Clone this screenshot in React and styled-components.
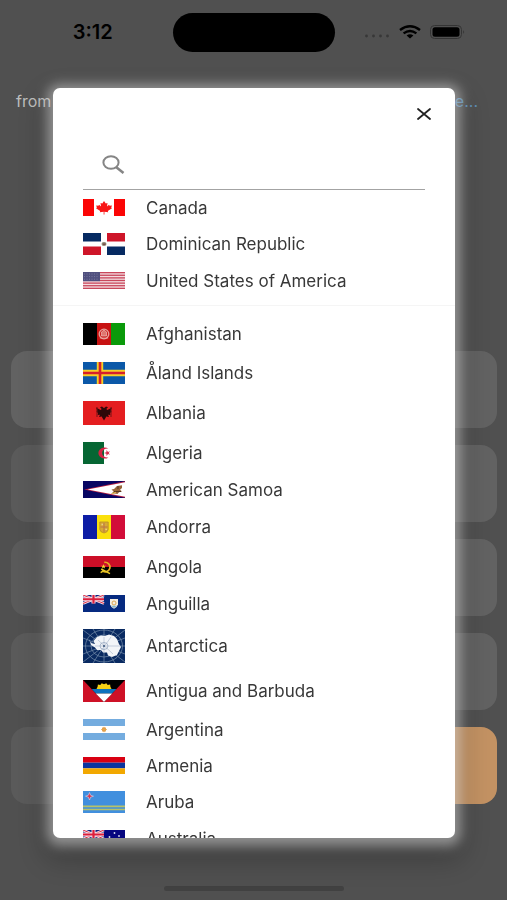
import React, { useState } from "react";
import styled, { createGlobalStyle } from "styled-components";

const GlobalStyle = createGlobalStyle`
  body {
    margin: 0;
    background-color: #505050;
    font-family: Inter, "Liberation Sans", sans-serif;
  }
  * {
    box-sizing: border-box;
  }
`;

const Screen = styled.div`
  display: flex;
  flex-direction: column;
  min-height: 100vh;
  background-color: #505050;
`;

const StatusBar = styled.header`
  display: grid;
  grid-template-columns: 1fr 162px 1fr;
  align-items: center;
  height: 64px;
`;

const Clock = styled.time`
  padding-left: 13px;
  text-align: center;
  font-size: 20px;
  font-weight: 600;
  line-height: 24px;
  color: #000000;
`;

const Island = styled.div`
  height: 39px;
  border-radius: 20px;
  background-color: #000000;
`;

const StatusIcons = styled.div`
  display: flex;
  justify-content: flex-end;
  align-items: center;
  gap: 9px;
  padding-right: 41px;
`;

const Summary = styled.div`
  display: flex;
  justify-content: space-between;
  padding: 27px 29px 0 16px;
  font-size: 16px;
  line-height: 20px;
  color: #bdbdbd;
  a {
    color: #5f8fb5;
    text-decoration: none;
  }
`;

const Keypad = styled.div`
  display: grid;
  grid-template-columns: repeat(4, 1fr);
  gap: 17px 12px;
  margin-top: auto;
  padding: 0 10px 0 11px;
`;

const Key = styled.button`
  height: 77px;
  border: none;
  border-radius: 16px;
  background-color: ${(props) => (props.$accent ? "#c39263" : props.$side ? "#626262" : "#5a5a5a")};
`;

const HomeIndicator = styled.div`
  align-self: center;
  width: 180px;
  height: 5px;
  margin: 82px 0 9px;
  border-radius: 3px;
  background-color: #414141;
`;

const Overlay = styled.div`
  position: fixed;
  inset: 0;
  display: flex;
  padding: 88px 52px 62px 53px;
`;

const Dialog = styled.section`
  display: flex;
  flex-direction: column;
  flex: 1;
  min-width: 0;
  border-radius: 7px;
  background-color: #ffffff;
  box-shadow: 0 2px 12px 6px rgba(255, 255, 255, 0.42),
    0 14px 26px 10px rgba(0, 0, 0, 0.2);
`;

const DialogHeader = styled.div`
  display: flex;
  justify-content: flex-end;
  align-items: center;
  height: 52px;
  padding-right: 18px;
`;

const CloseButton = styled.button`
  display: flex;
  padding: 6px;
  border: none;
  background: none;
  cursor: pointer;
`;

const SearchField = styled.label`
  display: flex;
  align-items: center;
  flex-shrink: 0;
  gap: 12px;
  height: 50px;
  margin: 0 30px;
  padding-left: 19px;
  border-bottom: 1px solid #a3a3a3;
  input {
    flex: 1;
    min-width: 0;
    height: 30px;
    padding: 0;
    border: none;
    outline: none;
    background: none;
    font-family: inherit;
    font-size: 17px;
    color: #333333;
  }
`;

const Scroller = styled.div`
  flex: 1;
  min-height: 0;
  overflow-y: auto;
  border-radius: 0 0 7px 7px;
  scrollbar-width: none;
`;

const CountryList = styled.ul`
  display: flex;
  flex-direction: column;
  gap: 17px;
  margin: 0;
  padding: ${(props) => (props.$pinned ? "9px 30px 16px" : "17px 30px")};
  border-bottom: ${(props) => (props.$pinned ? "1px solid #f5f5f5" : "none")};
  list-style: none;
`;

const CountryButton = styled.button`
  display: flex;
  align-items: center;
  gap: 21px;
  width: 100%;
  padding: 0;
  border: none;
  background: none;
  font-family: inherit;
  font-size: 17px;
  line-height: 16px;
  text-align: left;
  color: #383838;
  cursor: pointer;
  svg {
    flex-shrink: 0;
  }
`;

const UnionJack = ({ h }) => (
  <g>
    <rect width="21" height={h} fill="#10207c" />
    <path d={`M0 0L21 ${h}M21 0L0 ${h}`} stroke="#f4dfe8" strokeWidth="2.6" />
    <path d={`M0 0L21 ${h}M21 0L0 ${h}`} stroke="#dd3348" strokeWidth="1" />
    <path d={`M10.5 0V${h}M0 ${h / 2}H21`} stroke="#f4dfe8" strokeWidth="4" />
    <path d={`M10.5 0V${h}M0 ${h / 2}H21`} stroke="#dc1f3c" strokeWidth="2.2" />
  </g>
);

const stripes = (colors, h) =>
  colors.map((fill, i) => (
    <rect key={i} y={(i * h) / colors.length} width="42" height={h / colors.length} fill={fill} />
  ));

const columns = (colors, h) =>
  colors.map((fill, i) => <rect key={i} x={i * 14} width="14" height={h} fill={fill} />);

const flags = {
  ca: {
    h: 17,
    art: (
      <>
        <rect width="42" height="17" fill="#fff" />
        <path d="M0 0H11V17H0ZM31 0H42V17H31Z" fill="#fb0505" />
        <path
          d="M21 2L22.8 4.6L24.5 4L24 7.4L26 5.7L26.6 6.8L29 6.5L28.2 8.5L29 9.2L24.8 12L25.2 13.2L21.4 12.7L21.5 15.5H20.6L20.7 12.7L16.8 13.2L17.2 12L13 9.2L13.9 8.5L13.1 6.5L15.5 6.8L16 5.7L18.1 7.4L17.5 4L19.3 4.6Z"
          fill="#f81616"
        />
      </>
    ),
  },
  do: {
    h: 22,
    art: (
      <>
        <rect width="42" height="22" fill="#fff" />
        <path d="M0 0H18V8.6H0ZM24 13.4H42V22H24Z" fill="#062a62" />
        <path d="M24 0H42V8.6H24ZM0 13.4H18V22H0Z" fill="#ce1529" />
        <ellipse cx="21" cy="11" rx="2.5" ry="2" fill="#8d8770" />
        <path d="M20 10.5H22.4V12H20Z" fill="#7a4d4c" />
      </>
    ),
  },
  us: {
    h: 17,
    art: (
      <>
        <rect width="42" height="17" fill="#f3dce0" />
        {[0, 1, 2, 3, 4, 5, 6].map((i) => (
          <rect key={i} y={(i * 34) / 13} width="42" height="1.3" fill="#c9475c" />
        ))}
        <rect width="17" height="9.2" fill="#50507f" />
        <path d="M1 2H16M1 4.6H16M1 7.2H16" stroke="#8080a5" strokeWidth="0.8" strokeDasharray="1 1.5" />
      </>
    ),
  },
  af: {
    h: 22,
    art: (
      <>
        {columns(["#000", "#c71212", "#0a9a0a"], 22)}
        <circle cx="21" cy="11" r="4.8" fill="none" stroke="#e7a09a" strokeWidth="1.3" />
        <path d="M18.4 9L21 7L23.6 9V13H18.4ZM16.8 15H25.2" fill="#df7770" stroke="#f0c3bc" strokeWidth="0.7" />
      </>
    ),
  },
  ax: {
    h: 22,
    art: (
      <>
        <rect width="42" height="22" fill="#0b58a8" />
        <path d="M17 0V22M0 11H42" stroke="#f7cf26" strokeWidth="6.4" />
        <path d="M17 0V22M0 11H42" stroke="#d61e2c" strokeWidth="2.6" />
      </>
    ),
  },
  al: {
    h: 24,
    art: (
      <>
        <rect width="42" height="24" fill="#e41e20" />
        <path
          d="M20.8 7L19 5.5L17 6.2L18.7 8L17.6 9L13 6.5L14 9L13.6 11L15 12L14.7 14L17 13.7L16 16L18.7 15.4L19.5 17L21 19.5L22.5 17L23.3 15.4L26 16L25 13.7L27.3 14L27 12L28.4 11L28 9L29 6.5L24.4 9L23.3 8L25 6.2L23 5.5L21.2 7Z"
          fill="#2f0809"
        />
        <path d="M14 6V16M28 6V16" stroke="#751315" strokeWidth="1" />
      </>
    ),
  },
  dz: {
    h: 22,
    art: (
      <>
        <rect width="42" height="22" fill="#fff" />
        <rect width="21" height="22" fill="#066633" />
        <path d="M25.4 6.6A6.2 5.6 0 1 0 25.4 15.4A5.2 4.5 0 1 1 25.4 6.6Z" fill="#d42242" />
        <path d="M21 11L23.4 10.3L23.5 8L25 9.9L27 9.2L25.7 11L27 12.8L25 12.1L23.5 14L23.4 11.7Z" fill="#d8294a" />
      </>
    ),
  },
  as: {
    h: 17,
    art: (
      <>
        <rect width="42" height="17" fill="#070562" />
        <path d="M42 0.2L1 8.5L42 16.8Z" fill="#b51f41" />
        <path d="M42 1.2L4.5 8.5L42 15.8Z" fill="#fff" />
        <path d="M39 4.2L34 5L31 8L28.5 8.5L30.6 10.6L28 13L31.5 12.4L34.5 13L36 11.3L39 10.5L37 8.8L39 7Z" fill="#97663a" />
        <path d="M31 10.5H38M35 5V8" stroke="#543725" strokeWidth="1" />
        <path d="M29 12.8L33 11.2" stroke="#edc64c" strokeWidth="0.9" />
      </>
    ),
  },
  ad: {
    h: 24,
    art: (
      <>
        {columns(["#0d1da5", "#fae00c", "#d20d39"], 24)}
        <path d="M16.8 7H25.2V14.5Q25 17 21 18Q17 17 16.8 14.5Z" fill="#d7a935" stroke="#b98b2a" strokeWidth="0.8" />
        <path d="M21 8V17M17.5 12H24.6" stroke="#ba7449" strokeWidth="1" />
        <path d="M18.5 9.5H20M22.4 14.4H24" stroke="#e9cf87" strokeWidth="1.4" />
      </>
    ),
  },
  ao: {
    h: 22,
    art: (
      <>
        {stripes(["#cc0e27", "#000"], 22)}
        <path d="M21.3 6.3A5 4.8 0 1 1 19 14.9" fill="none" stroke="#e1ae22" strokeWidth="1.7" />
        <path d="M18.2 13L27 17.7M17.6 16.6L21 14.5" stroke="#e9ca27" strokeWidth="1.5" />
        <path d="M20.5 8L21.1 9.7H23L21.5 10.8L22.1 12.6L20.5 11.5L18.9 12.6L19.5 10.8L18 9.7H19.9Z" fill="#f4d82e" />
      </>
    ),
  },
  ai: {
    h: 17,
    art: (
      <>
        <rect width="42" height="17" fill="#062a80" />
        <UnionJack h={8.5} />
        <path d="M27 4H35V9.5Q34 12.5 31 13.8Q28 12.5 27 9.5Z" fill="#f5eee1" />
        <path d="M28 10.8H34L31 13Z" fill="#81b5cc" />
        <circle cx="31" cy="8" r="2" fill="none" stroke="#dfa852" strokeWidth="1" />
      </>
    ),
  },
  aq: {
    h: 34,
    art: (
      <>
        <rect width="42" height="34" fill="#092a61" />
        <g fill="none" stroke="#7890ae" strokeWidth="0.7">
          <ellipse cx="21" cy="17" rx="18.5" ry="16" />
          <ellipse cx="21" cy="17" rx="13" ry="11" />
          <path d="M21 0V34M0 17H42M0 1L42 33M42 1L0 33M10 0L32 34M32 0L10 34M0 9L42 25M0 25L42 9" />
        </g>
        <path
          d="M6 10L8 14L12 15L10.5 12L14 8L18 6.5L22 7L26 5.5L31 7L34 10L36 15L38 18L36 22L34 26L29 28L25 26.5L24 23.5L20 23.5L18 21L14 21L12 18.5L8 16Z"
          fill="#f2f5f8"
        />
        <path d="M21 8V24M12 17H37M15 11L30 25M28 8L18 22" stroke="#a4b4c9" strokeWidth="0.6" />
        <ellipse cx="21" cy="17" rx="4" ry="3.5" fill="none" stroke="#8c9fb9" strokeWidth="0.7" />
        <circle cx="21" cy="17" r="1" fill="#385379" />
      </>
    ),
  },
  ag: {
    h: 22,
    art: (
      <>
        <rect width="42" height="22" fill="#ce1126" />
        <path d="M0 0H42L21 22Z" fill="#000" />
        <path d="M13.5 9L14.6 6.8L14.9 4.6L17.3 5L18.7 3.2L21 4.2L23.3 3.2L24.7 5L27.1 4.6L27.4 6.8L28.5 9Z" fill="#f5d116" />
        <path d="M8.6 9H33.4L29 13.4H13Z" fill="#0d72bd" />
        <path d="M12.8 13.4H29.2L21 22Z" fill="#fff" />
      </>
    ),
  },
  ar: {
    h: 21,
    art: (
      <>
        {stripes(["#74acdf", "#fff", "#74acdf"], 21)}
        <circle cx="21" cy="10.5" r="2.2" fill="#da9545" />
        <path d="M18 10.5H24M21 7.8V13.2M19 8.7L23 12.3M23 8.7L19 12.3" stroke="#eaa94f" strokeWidth="0.7" />
      </>
    ),
  },
  am: { h: 17, art: stripes(["#d90012", "#0a35a0", "#f2a800"], 17) },
  aw: {
    h: 22,
    art: (
      <>
        <rect width="42" height="22" fill="#418fde" />
        <path d="M0 15.4H42M0 18.5H42" stroke="#b7c269" strokeWidth="1.7" />
        <path d="M6.5 1.5L7.6 4.2L10.5 5.2L7.6 6.2L6.5 9L5.4 6.2L2.5 5.2L5.4 4.2Z" fill="#d43452" stroke="#d9d8e9" strokeWidth="0.6" />
      </>
    ),
  },
  au: {
    h: 17,
    art: (
      <>
        <rect width="42" height="17" fill="#06067f" />
        <UnionJack h={9} />
        <g fill="#dfe1f1">
          <circle cx="31.5" cy="3" r="0.9" />
          <circle cx="36" cy="6" r="0.9" />
          <circle cx="26.5" cy="7" r="0.9" />
          <circle cx="33" cy="8.5" r="0.6" />
          <circle cx="31.5" cy="14" r="1" />
          <circle cx="10.5" cy="13" r="2" />
        </g>
      </>
    ),
  },
};

const pinned = [
  ["ca", "Canada"],
  ["do", "Dominican Republic"],
  ["us", "United States of America"],
];

const countries = [
  ["af", "Afghanistan"],
  ["ax", "Åland Islands"],
  ["al", "Albania"],
  ["dz", "Algeria"],
  ["as", "American Samoa"],
  ["ad", "Andorra"],
  ["ao", "Angola"],
  ["ai", "Anguilla"],
  ["aq", "Antarctica"],
  ["ag", "Antigua and Barbuda"],
  ["ar", "Argentina"],
  ["am", "Armenia"],
  ["aw", "Aruba"],
  ["au", "Australia"],
];

const Flag = ({ code }) => {
  const { h, art } = flags[code];
  return (
    <svg width="42" height={h} viewBox={`0 0 42 ${h}`} aria-hidden="true">
      {art}
    </svg>
  );
};

const Countries = ({ items, isPinned }) => (
  <CountryList $pinned={isPinned}>
    {items.map(([code, name]) => (
      <li key={code}>
        <CountryButton type="button">
          <Flag code={code} />
          {name}
        </CountryButton>
      </li>
    ))}
  </CountryList>
);

const SignalIcons = () => (
  <StatusIcons>
    <svg width="26" height="14" viewBox="0 0 26 14">
      <g fill="#373737">
        <circle cx="2.5" cy="11" r="1.4" />
        <circle cx="9.5" cy="11" r="1.4" />
        <circle cx="16.5" cy="11" r="1.4" />
        <circle cx="23.5" cy="11" r="1.4" />
      </g>
    </svg>
    <svg width="22" height="14" viewBox="0 0 22 14" fill="none" stroke="#000" strokeWidth="2.4">
      <path d="M1 5Q11 -2.5 21 5" />
      <path d="M4.6 8.4Q11 3.4 17.4 8.4" />
      <path d="M7.6 10.6Q11 7.9 14.4 10.6L11 13.6Z" fill="#000" stroke="none" />
    </svg>
    <svg width="36" height="14" viewBox="0 0 36 14">
      <rect x="0.5" y="0.5" width="31" height="13" rx="4" fill="none" stroke="#343434" />
      <rect x="2.5" y="2.3" width="27" height="9.4" rx="2.5" fill="#000" />
      <path d="M33.2 5Q35 7 33.2 9Z" fill="#303030" />
    </svg>
  </StatusIcons>
);

export default () => {
  const [query, setQuery] = useState("");

  const matches = (items) =>
    items.filter(([, name]) => name.toLowerCase().includes(query.toLowerCase()));

  return (
    <>
      <GlobalStyle />
      <Screen>
        <StatusBar>
          <Clock>3:12</Clock>
          <Island />
          <SignalIcons />
        </StatusBar>
        <Summary>
          <span>from</span>
          <a href="#more">e...</a>
        </Summary>
        <Keypad>
          {Array.from({ length: 20 }, (_, i) => (
            <Key key={i} type="button" tabIndex={-1} $side={i % 4 === 3 || i === 0} $accent={i === 19} />
          ))}
        </Keypad>
        <HomeIndicator />
      </Screen>
      <Overlay>
        <Dialog role="dialog" aria-label="Country">
          <DialogHeader>
            <CloseButton type="button" aria-label="Close">
              <svg width="14" height="12" viewBox="0 0 14 12" stroke="#222" strokeWidth="1.8" strokeLinecap="round">
                <path d="M1 1L13 11M13 1L1 11" />
              </svg>
            </CloseButton>
          </DialogHeader>
          <SearchField>
            <svg width="23" height="19" viewBox="0 0 23 19" fill="none" stroke="#858585">
              <ellipse cx="9" cy="7.5" rx="7.6" ry="6.3" strokeWidth="2" />
              <path d="M14 12L21.5 18" strokeWidth="2.6" />
            </svg>
            <input
              type="text"
              aria-label="Search"
              value={query}
              onChange={(e) => setQuery(e.currentTarget.value)}
            />
          </SearchField>
          <Scroller>
            <Countries items={matches(pinned)} isPinned />
            <Countries items={matches(countries)} />
          </Scroller>
        </Dialog>
      </Overlay>
    </>
  );
};
